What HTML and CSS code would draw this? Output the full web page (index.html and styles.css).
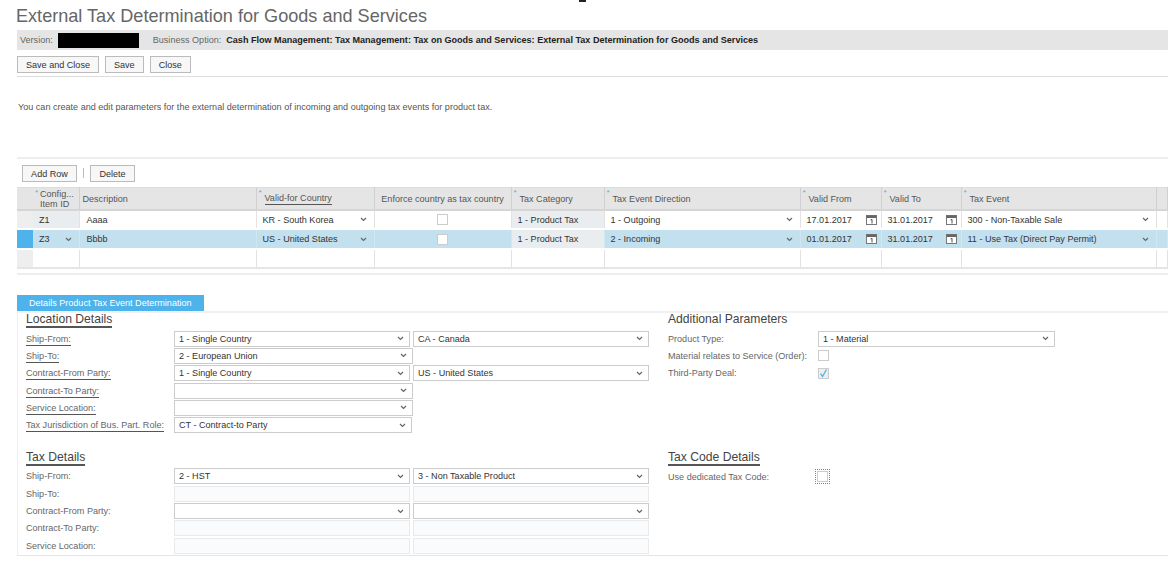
FILE: index.html
```html
<!DOCTYPE html>
<html>
<head>
<title>External Tax Determination for Goods and Services</title>
<link rel="stylesheet" href="styles.css">
</head>
<body>
<svg class="defs" width="0" height="0">
  <symbol id="chev" viewBox="0 0 7 5"><path d="M1 1l2.5 2.5L6 1" fill="none" stroke="#666" stroke-width="1.2"/></symbol>
  <symbol id="cal" viewBox="0 0 11 10">
    <rect x="0.5" y="0.5" width="10" height="9" fill="#fff" stroke="#777"/>
    <rect x="0.5" y="0.5" width="10" height="2.5" fill="#666"/>
    <path d="M4.500 5l1.500-.7V8.500" fill="none" stroke="#555"/>
  </symbol>
</svg>
<div class="cursor-mark"></div>

<h1 class="page-title">External Tax Determination for Goods and Services</h1>
<div class="info-bar">
  <span class="info-label">Version:</span>
  <span class="redacted"></span>
  <span class="info-label option-label">Business Option:</span>
  <b>Cash Flow Management: Tax Management: Tax on Goods and Services: External Tax Determination for Goods and Services</b>
</div>
<div class="toolbar main-toolbar">
  <button class="btn">Save and Close</button>
  <button class="btn">Save</button>
  <button class="btn">Close</button>
</div>
<p class="intro">You can create and edit parameters for the external determination of incoming and outgoing tax events for product tax.</p>

<div class="toolbar table-toolbar">
  <button class="btn btn-add">Add Row</button>
  <span class="sep"></span>
  <button class="btn btn-del">Delete</button>
</div>

<table class="grid">
  <colgroup>
    <col class="c-sel"><col class="c-id"><col class="c-desc"><col class="c-country"><col class="c-enforce">
    <col class="c-cat"><col class="c-dir"><col class="c-from"><col class="c-to"><col class="c-event"><col>
  </colgroup>
  <thead>
    <tr>
      <th></th>
      <th class="th-id req">Config...<br>Item ID</th>
      <th class="th-desc">Description</th>
      <th class="req"><span class="mark">Valid-for Country</span></th>
      <th class="th-center">Enforce country as tax country</th>
      <th class="req">Tax Category</th>
      <th class="req">Tax Event Direction</th>
      <th class="req">Valid From</th>
      <th class="req">Valid To</th>
      <th class="req">Tax Event</th>
      <th></th>
    </tr>
  </thead>
  <tbody>
    <tr>
      <td class="sel"></td>
      <td class="readonly id-cell">Z1</td>
      <td class="desc-cell">Aaaa</td>
      <td><div class="cell-flex">KR - South Korea<svg class="chev"><use href="#chev"/></svg></div></td>
      <td class="center"><span class="check"></span></td>
      <td class="readonly">1 - Product Tax</td>
      <td><div class="cell-flex">1 - Outgoing<svg class="chev"><use href="#chev"/></svg></div></td>
      <td><div class="cell-flex">17.01.2017<svg class="cal"><use href="#cal"/></svg></div></td>
      <td><div class="cell-flex">31.01.2017<svg class="cal"><use href="#cal"/></svg></div></td>
      <td><div class="cell-flex">300 - Non-Taxable Sale<svg class="chev"><use href="#chev"/></svg></div></td>
      <td></td>
    </tr>
    <tr class="selected">
      <td class="sel"></td>
      <td class="id-cell"><div class="cell-flex">Z3<svg class="chev"><use href="#chev"/></svg></div></td>
      <td class="desc-cell">Bbbb</td>
      <td><div class="cell-flex">US - United States<svg class="chev"><use href="#chev"/></svg></div></td>
      <td class="center"><span class="check"></span></td>
      <td class="readonly">1 - Product Tax</td>
      <td><div class="cell-flex">2 - Incoming<svg class="chev"><use href="#chev"/></svg></div></td>
      <td><div class="cell-flex">01.01.2017<svg class="cal"><use href="#cal"/></svg></div></td>
      <td><div class="cell-flex">31.01.2017<svg class="cal"><use href="#cal"/></svg></div></td>
      <td><div class="cell-flex">11 - Use Tax (Direct Pay Permit)<svg class="chev"><use href="#chev"/></svg></div></td>
      <td></td>
    </tr>
    <tr>
      <td class="sel"></td><td></td><td></td><td></td><td></td><td></td><td></td><td></td><td></td><td></td><td></td>
    </tr>
  </tbody>
</table>
<div class="grid-foot"></div>

<div class="tab">Details Product Tax Event Determination</div>
<div class="panel">
  <div class="panel-left">
    <h2 class="section"><span class="mark">Location Details</span></h2>
    <div class="form-row"><label><span class="mark">Ship-From:</span></label><div class="dd w-a">1 - Single Country<svg class="chev"><use href="#chev"/></svg></div><div class="dd w-b">CA - Canada<svg class="chev"><use href="#chev"/></svg></div></div>
    <div class="form-row"><label><span class="mark">Ship-To:</span></label><div class="dd w-c">2 - European Union<svg class="chev"><use href="#chev"/></svg></div></div>
    <div class="form-row"><label><span class="mark">Contract-From Party:</span></label><div class="dd w-a">1 - Single Country<svg class="chev"><use href="#chev"/></svg></div><div class="dd w-b">US - United States<svg class="chev"><use href="#chev"/></svg></div></div>
    <div class="form-row"><label><span class="mark">Contract-To Party:</span></label><div class="dd w-c"><svg class="chev"><use href="#chev"/></svg></div></div>
    <div class="form-row"><label><span class="mark">Service Location:</span></label><div class="dd w-c"><svg class="chev"><use href="#chev"/></svg></div></div>
    <div class="form-row"><label><span class="mark">Tax Jurisdiction of Bus. Part. Role:</span></label><div class="dd w-d">CT - Contract-to Party<svg class="chev"><use href="#chev"/></svg></div></div>

    <h2 class="section section-two"><span class="mark">Tax Details</span></h2>
    <div class="form-row"><label>Ship-From:</label><div class="dd w-a">2 - HST<svg class="chev"><use href="#chev"/></svg></div><div class="dd w-b">3 - Non Taxable Product<svg class="chev"><use href="#chev"/></svg></div></div>
    <div class="form-row"><label>Ship-To:</label><div class="dd w-a off"></div><div class="dd w-b off"></div></div>
    <div class="form-row"><label>Contract-From Party:</label><div class="dd w-a"><svg class="chev"><use href="#chev"/></svg></div><div class="dd w-b"><svg class="chev"><use href="#chev"/></svg></div></div>
    <div class="form-row"><label>Contract-To Party:</label><div class="dd w-a off"></div><div class="dd w-b off"></div></div>
    <div class="form-row"><label>Service Location:</label><div class="dd w-a off"></div><div class="dd w-b off"></div></div>
  </div>
  <div class="panel-right">
    <h2 class="section">Additional Parameters</h2>
    <div class="form-row"><label class="lbl-right">Product Type:</label><div class="dd w-e">1 - Material<svg class="chev"><use href="#chev"/></svg></div></div>
    <div class="form-row"><label class="lbl-right">Material relates to Service (Order):</label><span class="check check-form"></span></div>
    <div class="form-row"><label class="lbl-right">Third-Party Deal:</label><span class="check check-form checked"><svg viewBox="0 0 11 11" width="11" height="11"><path d="M2.500 5.500l2 3L8.500 1.500" fill="none" stroke="#4db3ea" stroke-width="1.300"/></svg></span></div>

    <h2 class="section section-three"><span class="mark">Tax Code Details</span></h2>
    <div class="form-row"><label class="lbl-right">Use dedicated Tax Code:</label><span class="focus-ring"><span class="check"></span></span></div>
  </div>
</div>
</body>
</html>
```

FILE: styles.css
```css
html, body {
  margin: 0;
  padding: 0;
}
body {
  width: 1168px;
  height: 563px;
  overflow: hidden;
  position: relative;
  background: #fff;
  font-family: "Liberation Sans", Arial, sans-serif;
  font-size: 9.07px;
  color: #333;
}
.defs {
  position: absolute;
}
.cursor-mark {
  position: absolute;
  left: 579px;
  top: 0;
  width: 7px;
  height: 2px;
  background: #222;
}

.page-title {
  margin: 0;
  padding: 6px 0 0 16px;
  height: 30px;
  box-sizing: border-box;
  font-size: 18.1px;
  line-height: 20px;
  font-weight: normal;
  color: #666;
}
.info-bar {
  margin: 0 0 0 17px;
  height: 20px;
  background: #e5e5e5;
  display: flex;
  align-items: center;
  padding-left: 3px;
  color: #222;
}
.info-label {
  color: #666;
}
.redacted {
  width: 81px;
  height: 15px;
  margin-left: 5px;
  background: #000;
}
.option-label {
  margin-left: 14px;
  margin-right: 5px;
}

.toolbar {
  display: flex;
  align-items: center;
}
.main-toolbar {
  margin: 6px 0 0 17px;
  height: 17px;
  padding-bottom: 3px;
  border-bottom: 1px solid #ddd;
  gap: 6px;
}
.btn {
  height: 17px;
  padding: 0 8px;
  border: 1px solid #bbb;
  background: #f7f7f7;
  font-family: inherit;
  font-size: 9.07px;
  color: #333;
  border-radius: 0;
}

.intro {
  margin: 24px 0 0 18px;
  height: 12px;
  line-height: 12px;
  color: #555;
}

.table-toolbar {
  margin: 44px 0 0 17px;
  height: 30px;
  padding: 6px 0 0 5px;
  box-sizing: border-box;
  border-top: 2px solid #eee;
  align-items: flex-start;
}
.btn-add {
  width: 55px;
  padding: 0;
}
.btn-del {
  width: 45px;
  padding: 0;
}
.sep {
  width: 1px;
  height: 10px;
  margin: 3px 6px 0 6px;
  background: #bbb;
}

.grid {
  margin-left: 17px;
  width: 1151px;
  border-collapse: collapse;
  table-layout: fixed;
  color: #333;
}
.c-sel { width: 16px; }
.c-id { width: 46px; }
.c-desc { width: 177px; }
.c-country { width: 118px; }
.c-enforce { width: 137px; }
.c-cat { width: 93px; }
.c-dir { width: 196px; }
.c-from { width: 81px; }
.c-to { width: 80px; }
.c-event { width: 195px; }
.grid th {
  height: 21px;
  padding: 0 0 0 8px;
  background: #e5e5e5;
  border-top: 1px solid #ddd;
  border-bottom: 2px solid #d5d5d5;
  border-right: 1px solid #d0d0d0;
  font-weight: normal;
  text-align: left;
  color: #555;
  line-height: 10px;
  position: relative;
}
.grid th:first-child {
  border-right: 0;
}
.grid th.th-id {
  padding-left: 7px;
}
.grid th.th-desc {
  padding-left: 3px;
}
.grid th.th-center {
  text-align: center;
  padding-left: 0;
}
.req::before {
  content: "*";
  position: absolute;
  left: 2px;
  top: 1px;
  color: #4db3ea;
  font-size: 8px;
  line-height: 8px;
}
.mark {
  display: inline-block;
  border-bottom: 1px solid #555;
  line-height: 11px;
}
.form-row .mark {
  padding-top: 2px;
}
.grid td {
  height: 17px;
  padding: 0 6px;
  border-bottom: 2px solid #fff;
  border-right: 1px solid #e2e2e2;
  overflow: hidden;
  white-space: nowrap;
}
.grid tbody tr:last-child td {
  border-bottom: 2px solid #e5e5e5;
  height: 17px;
}
.grid td.sel {
  padding: 0;
  background: #eee;
  border-right: 0;
}
.grid td.readonly {
  background: #e9edf0;
}
.grid td.id-cell {
  padding-left: 6px;
}
.grid td.desc-cell {
  padding-left: 7px;
}
.grid .selected td {
  background: #c3e0ef;
  border-right-color: #d2e6f1;
  height: 18px;
}
.grid .selected td.sel {
  background: #4db3ea;
}
.grid .selected td.readonly {
  background: #e9edf0;
}
.center {
  text-align: center;
}
.cell-flex {
  display: flex;
  align-items: center;
  justify-content: space-between;
}
.chev {
  width: 7px;
  height: 5px;
  flex: none;
  margin-right: 1px;
}
.cal {
  width: 11px;
  height: 10px;
  flex: none;
  margin-right: -2px;
}
.check {
  display: inline-block;
  width: 9px;
  height: 9px;
  border: 1px solid #ccc;
  background: #fff;
  vertical-align: middle;
}
.grid-foot {
  margin: 4px 0 0 17px;
  height: 2px;
  background: #eee;
}

.tab {
  margin: 20px 0 0 17px;
  width: 187px;
  height: 16px;
  box-sizing: border-box;
  padding-left: 12px;
  line-height: 16px;
  background: #4db3ea;
  color: #fff;
}
.panel {
  margin-left: 17px;
  height: 245px;
  box-sizing: border-box;
  border-top: 2px solid #f2f2f2;
  border-left: 1px solid #eee;
  border-bottom: 1px solid #e5e5e5;
  display: flex;
}
.panel-left {
  width: 650px;
  padding-left: 8px;
  box-sizing: border-box;
}
.section {
  margin: 0;
  height: 17px;
  font-size: 12.15px;
  font-weight: normal;
  line-height: 13px;
  color: #444;
}
.section .mark {
  line-height: 13px;
  border-bottom: 2px solid #555;
}
.section-two {
  margin-top: 17px;
  height: 17px;
}
.section-three {
  margin-top: 69px;
  height: 17px;
}
.form-row {
  display: flex;
  align-items: center;
  height: 17.3px;
}
.form-row label {
  width: 148px;
  flex: none;
  color: #666;
}
.form-row .lbl-right {
  width: 150px;
}
.dd {
  height: 16px;
  box-sizing: border-box;
  border: 1px solid #ccc;
  background: #fff;
  display: flex;
  align-items: center;
  justify-content: space-between;
  padding: 0 4px;
  color: #333;
}
.dd .chev {
  margin-left: auto;
}
.w-a { width: 236px; }
.w-b { width: 236px; margin-left: 3px; }
.w-c { width: 239px; }
.w-d { width: 238px; }
.w-e { width: 237px; }
.off {
  background: #fafbfc;
  border-color: #e8eaec;
}
.check-form {
  width: 9px;
  height: 9px;
}
.checked {
  background: #eee;
  position: relative;
}
.checked svg {
  position: absolute;
  left: -1px;
  top: -1px;
}
.focus-ring {
  display: inline-flex;
  align-items: center;
  justify-content: center;
  width: 13px;
  height: 13px;
  margin-left: -3px;
  border: 1px dotted #4a90c0;
}
```
